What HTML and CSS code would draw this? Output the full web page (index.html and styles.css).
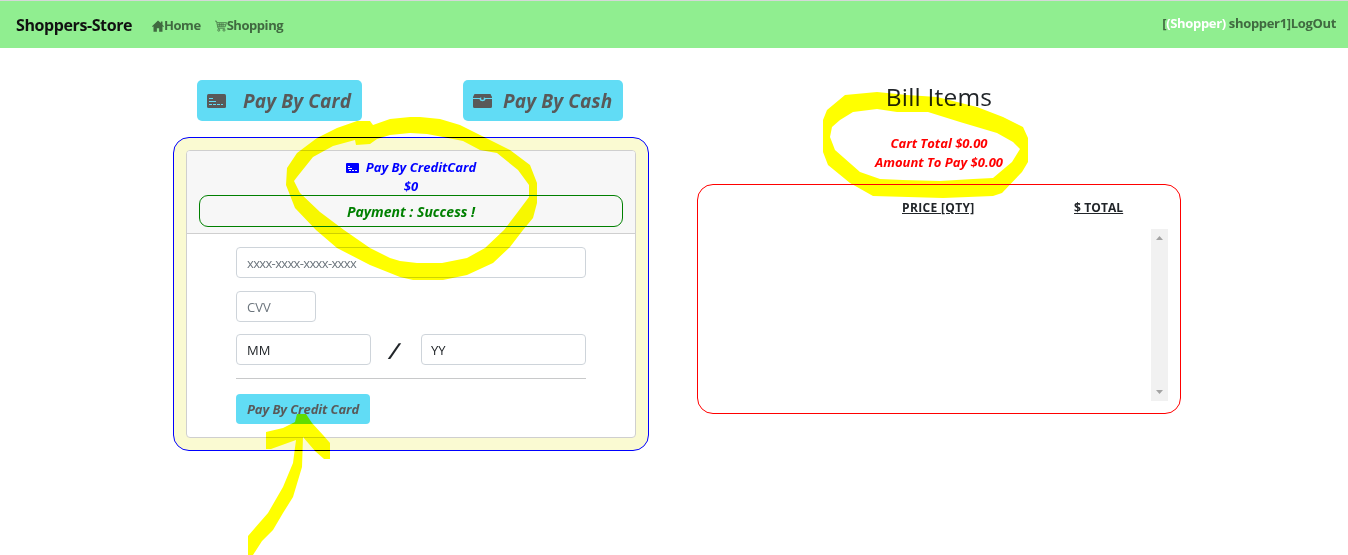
FILE: index.html
```html
<!DOCTYPE html>
<html lang="en">
<head>
<meta charset="utf-8">
<title>Shoppers-Store</title>
<link rel="stylesheet" href="styles.css">
</head>
<body>
<nav class="navbar">
  <span class="brand">Shoppers-Store</span>
  <a class="nav-link home"><svg class="nav-icon" viewBox="0 0 16 16"><path d="M8 .5 0 8.2l1 1 1-.9V15.500h4.500V11h3v4.500H14V8.300l1 .9 1-1-2-2V2h-2.200v2.100z"/></svg><span>Home</span></a>
  <a class="nav-link shopping"><svg class="nav-icon" viewBox="0 0 16 16"><path fill="none" stroke="currentColor" d="M0 1.500h2l2 9.500h9M2.700 3.500h12.600L13.700 9H3.800M5.700 4v5M8.200 4v5M10.700 4v5M3.300 6.300h11"/><circle cx="5" cy="13.500" r="1.400" fill="none" stroke="currentColor"/><circle cx="12" cy="13.500" r="1.400" fill="none" stroke="currentColor"/></svg><span>Shopping</span></a>
  <span class="user">[<span class="role">(Shopper)</span> shopper1]LogOut</span>
</nav>
<main class="page">
  <section class="payment">
    <div class="methods">
      <button class="btn btn-lg by-card"><svg class="btn-icon" viewBox="0 0 19 14"><rect width="19" height="14" rx="1.500"/><path stroke="#61dcf5" d="M2 4.500h4M2 7.500h7" fill="none"/><path stroke="#61dcf5" stroke-dasharray="3 1" d="M2 10.500h14" fill="none"/></svg><span>Pay By Card</span></button>
      <button class="btn btn-lg by-cash"><svg class="btn-icon" viewBox="0 0 19 14"><path d="M1.500 0h16L19 3v1h-7l-1-.8H8L7 4H0V3zM0 5h6.500c.5 3 5.500 3 6 0H19v7.500a1.500 1.500 0 0 1-1.500 1.500h-16A1.500 1.500 0 0 1 0 12.500z"/><path d="M8.200 3h2.600v2.200q-1.300 1.200-2.600 0z"/></svg><span>Pay By Cash</span></button>
    </div>
    <div class="panel">
      <div class="card">
        <header class="card-header">
          <div class="title"><svg class="title-icon" viewBox="0 0 13 10"><rect width="13" height="10" rx="1"/><path stroke="#f7f7f7" fill="none" d="M2 3.500h2M2 5.500h4M3 7.500h2M6 7.500h2M9 7.500h2"/></svg><span>Pay By CreditCard</span></div>
          <div class="amount">$0</div>
          <div class="status"><span>Payment : Success !</span></div>
        </header>
        <div class="card-body">
          <div class="field number">xxxx-xxxx-xxxx-xxxx</div>
          <div class="field cvv">CVV</div>
          <div class="expiry">
            <div class="field month">MM</div>
            <span class="slash">/</span>
            <div class="field year">YY</div>
          </div>
          <hr class="rule">
          <button class="btn btn-sm"><span>Pay By Credit Card</span></button>
        </div>
      </div>
    </div>
  </section>
  <section class="bill">
    <h3 class="bill-title">Bill Items</h3>
    <div class="totals"><div class="cart-total">Cart Total $0.00</div><div class="to-pay">Amount To Pay $0.00</div></div>
    <div class="items">
      <div class="columns"><span class="price">PRICE [QTY]</span><span class="total">$ TOTAL</span></div>
      <div class="scrollbar">
        <svg width="7" height="4" viewBox="0 0 7 4"><path d="M0 4 3.500 0 7 4z"/></svg>
        <svg width="7" height="4" viewBox="0 0 7 4"><path d="M0 0h7L3.500 4z"/></svg>
      </div>
    </div>
  </section>
</main>
<svg class="highlighter" width="1348" height="555" viewBox="0 0 1348 555">
  <path d="M420 117L410 117 390 119 373 125 370 121 357 121 337 128 317 138 297 153 287 168 286 185 295 208 316 230 337 248 370 265 400 277 413 280 443 280 467 275 493 263 510 247 523 230 533 218 537 203 537 183 530 165 510 150 490 140 460 125 440 119zM427 134L410 133 390 135 377 139 370 144 356 145 355 140 333 146 313 157 297 177 294 181 300 193 320 212 344 230 370 248 390 258 400 261 417 263 442 263 467 258 485 248 504 230 517 213 529 197 529 185 518 170 497 153 480 150 463 141 443 137z"/>
  <path d="M823 120L827 110 845 95 877 92 907 95 937 97 977 107 1003 117 1023 127 1028 138 1028 162 1022 172 1002 193 993 196 943 198 873 196 850 183 828 165 823 152zM832 127L840 120 853 112 877 109 897 112 928 112 960 122 997 133 1013 142 1020 149 1012 162 993 178 973 179 940 181 903 180 880 179 860 172 835 150 830 137z"/>
  <path d="M297 414H306L312 423 323 435 330 443V459H324L315 451 303 437 302 467 293 497 283 513 273 530 262 541 253 555H248V536L268 513 283 487 293 463 296 440 271 449H266V432L283 428 295 422z"/>
</svg>
</body>
</html>
```
FILE: styles.css
```css
* { box-sizing: border-box; }
body {
  margin: 0;
  height: 555px;
  overflow: hidden;
  position: relative;
  background: #fff;
  color: #212529;
  font-family: "Open Sans", "Noto Sans", sans-serif;
  font-size: 13px;
}
svg { fill: currentColor; flex: none; display: block; }
span { white-space: nowrap; }
.navbar {
  height: 48px;
  border-top: 1px solid #d5d8d8;
  background: #90ee90;
  display: flex;
  align-items: center;
  padding: 0 12px 0 16px;
  font-weight: 700;
  color: #406a40;
}
.brand { width: 136px; font-size: 16px; letter-spacing: -.4px; color: #111; }
.nav-link { display: flex; align-items: center; gap: 0; letter-spacing: -.45px; }
.nav-icon { width: 12px; height: 12px; margin-top: 2px; }
.shopping { margin-left: 14px; }
.user { margin: -4px 0 0 auto; letter-spacing: -.33px; }
.role { color: #fff; }
.page { display: flex; padding: 32px 167px 0 173px; justify-content: space-between; }
.payment { width: 476px; }
.methods { display: flex; justify-content: space-between; padding: 0 26px 0 24px; }
.btn {
  display: flex;
  align-items: center;
  border: 0;
  background: #61dcf5;
  color: #595959;
  font: italic 700 13px "Open Sans", "Noto Sans", sans-serif;
}
.btn-lg { height: 41px; padding: 0 10px; font-size: 19px; letter-spacing: .15px; border-radius: 5px; }
.by-card { width: 165px; gap: 17px; }
.by-cash { width: 160px; gap: 11px; }
.btn-icon { width: 19px; height: 14px; }
.panel {
  margin-top: 16px;
  height: 314px;
  border: 1px solid blue;
  border-radius: 16px;
  background: #fafad2;
  padding: 12px;
}
.card { height: 288px; border: 1px solid #cfcfcf; border-radius: 4px; background: #fff; overflow: hidden; }
.card-header {
  height: 83px;
  padding: 7px 12px;
  border-bottom: 1px solid #cfcfcf;
  background: #f7f7f7;
  color: blue;
  font-style: italic;
  font-weight: 700;
  line-height: 19px;
  text-align: center;
}
.title { display: flex; align-items: center; justify-content: center; gap: 7px; }
.title-icon { width: 13px; height: 10px; }
.amount { height: 18px; }
.status { height: 32px; border: 1px solid green; border-radius: 9px; color: green; font-size: 14px; line-height: 31px; }
.card-body { padding: 13px 49px; }
.field { height: 31px; border: 1px solid #ced4da; border-radius: 4px; padding: 0 10px; line-height: 31px; color: #6c757d; }
.number { letter-spacing: -.65px; }
.cvv { width: 80px; margin-top: 13px; }
.expiry { display: flex; justify-content: space-between; height: 31px; margin-top: 12px; }
.month { width: 135px; color: #212529; }
.year { width: 165px; padding-left: 9px; color: #212529; }
.slash { margin-right: 4px; font: italic 600 22px/32px "Open Sans", sans-serif; transform: skewX(-8deg); }
.rule { height: 1px; border: 0; margin: 13px 0 15px; background: #c8c9ca; }
.btn-sm { width: 134px; height: 30px; padding: 0 11px; border-radius: 4px; letter-spacing: -.1px; }
.bill { width: 484px; text-align: center; }
.bill-title { margin: 0; font-size: 24.5px; line-height: 34px; font-weight: 500; letter-spacing: .2px; }
.totals { margin-top: 20px; height: 50px; color: red; font-style: italic; font-weight: 700; line-height: 19px; }
.items { height: 230px; border: 1px solid red; border-radius: 16px; padding: 12px; }
.columns { display: flex; height: 32px; line-height: 21px; font-size: 12px; font-weight: 700; text-decoration: underline; }
.price { margin-left: 192px; width: 171px; text-align: left; letter-spacing: .35px; }
.total { margin-left: 1px; letter-spacing: .1px; }
.scrollbar { width: 17px; height: 172px; margin-left: auto; background: #f1f1f1; color: #a3a3a3; display: flex; flex-direction: column; justify-content: space-between; align-items: center; padding: 7px 0; }
.highlighter { position: absolute; left: 0; top: 0; pointer-events: none; mix-blend-mode: multiply; fill: #ff0; fill-rule: evenodd; }
```
